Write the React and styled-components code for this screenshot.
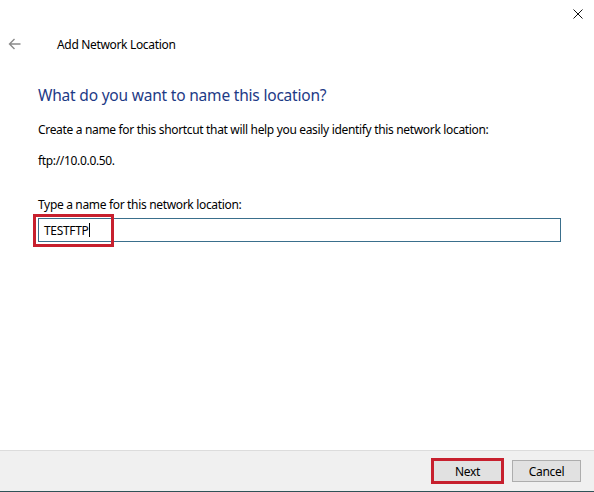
import React from 'react';
import styled, { createGlobalStyle } from 'styled-components';

const GlobalStyle = createGlobalStyle`
  html, body {
    margin: 0;
    padding: 0;
    background: #ffffff;
  }
  body {
    font-family: "Noto Sans", "Open Sans", sans-serif;
    font-size: 12px;
    letter-spacing: -0.33px;
    color: #000;
  }
`

const Window = styled.div`
  width: 594px;
  height: 492px;
  display: flex;
  flex-direction: column;
  background: #fff;
  position: relative;
  overflow: hidden;
`

const CloseButton = styled.div`
  position: absolute;
  top: 9px;
  right: 11px;
  width: 10px;
  height: 10px;
  display: flex;
`

const Header = styled.div`
  display: flex;
  align-items: center;
  height: 26px;
  margin-top: 31px;
  padding-left: 8px;
`

const BackArrow = styled.div`
  width: 13px;
  height: 12px;
  display: flex;
`

const Title = styled.div`
  margin-left: 36px;
  font-size: 12px;
  color: #000;
`

const Content = styled.div`
  flex: 1;
  display: flex;
  flex-direction: column;
  padding: 0 33px 0 38px;
`

const Heading = styled.h1`
  margin: 28px 0 0;
  font-size: 15.5px;
  font-weight: 400;
  letter-spacing: -0.2px;
  color: #1d3a86;
  line-height: 20px;
`

const Text = styled.p`
  margin: ${({ top }) => top}px 0 0;
  line-height: 16px;
  font-size: 12px;
`

const Field = styled.div`
  position: relative;
  margin-top: 5px;
  height: 24px;
  border: 1px solid #3a6f8c;
  box-sizing: border-box;
  display: flex;
  align-items: center;
  padding-left: 5px;
`

const FieldValue = styled.span`
  font-size: 12px;
`

const Caret = styled.span`
  display: inline-block;
  width: 1px;
  height: 14px;
  background: #000;
  margin-left: 1px;
`

const Highlight = styled.div`
  position: absolute;
  left: -6px;
  top: -5px;
  width: 81px;
  height: 33px;
  border: 3px solid #c7202e;
  box-sizing: border-box;
`

const Footer = styled.div`
  height: 42px;
  background: #f0f0f0;
  border-top: 1px solid #dcdcdc;
  border-bottom: 1px solid #2f5257;
  display: flex;
  align-items: center;
  justify-content: flex-end;
  gap: 10px;
  padding-right: 13px;
  box-sizing: border-box;
`

const Button = styled.div`
  width: 69px;
  height: 22px;
  box-sizing: border-box;
  background: #e1e1e1;
  border: 1px solid #adadad;
  display: flex;
  align-items: center;
  justify-content: center;
  font-size: 12px;
  color: #000;
  outline: ${({ marked }) => (marked ? '3px solid #c7202e' : 'none')};
  outline-offset: ${({ marked }) => (marked ? '-1px' : '0')};
`

export default function App() {
  return (
    <Window>
      <GlobalStyle />
      <CloseButton>
        <svg width="10" height="10" viewBox="0 0 10 10">
          <path d="M0.5 0.5 L9.5 9.5 M9.5 0.5 L0.5 9.5" stroke="#111" strokeWidth="1" fill="none" />
        </svg>
      </CloseButton>
      <Header>
        <BackArrow>
          <svg width="13" height="12" viewBox="0 0 13 12">
            <path d="M12.5 6 H1.5 M6.5 1 L1.5 6 L6.5 11" stroke="#8a8a8a" strokeWidth="1.4" fill="none" />
          </svg>
        </BackArrow>
        <Title>Add Network Location</Title>
      </Header>
      <Content>
        <Heading>What do you want to name this location?</Heading>
        <Text top={17}>Create a name for this shortcut that will help you easily identify this network location:</Text>
        <Text top={15}>ftp://10.0.0.50.</Text>
        <Text top={28}>Type a name for this network location:</Text>
        <Field>
          <FieldValue>TESTFTP</FieldValue>
          <Caret />
          <Highlight />
        </Field>
      </Content>
      <Footer>
        <Button marked>Next</Button>
        <Button>Cancel</Button>
      </Footer>
    </Window>
  );
}
